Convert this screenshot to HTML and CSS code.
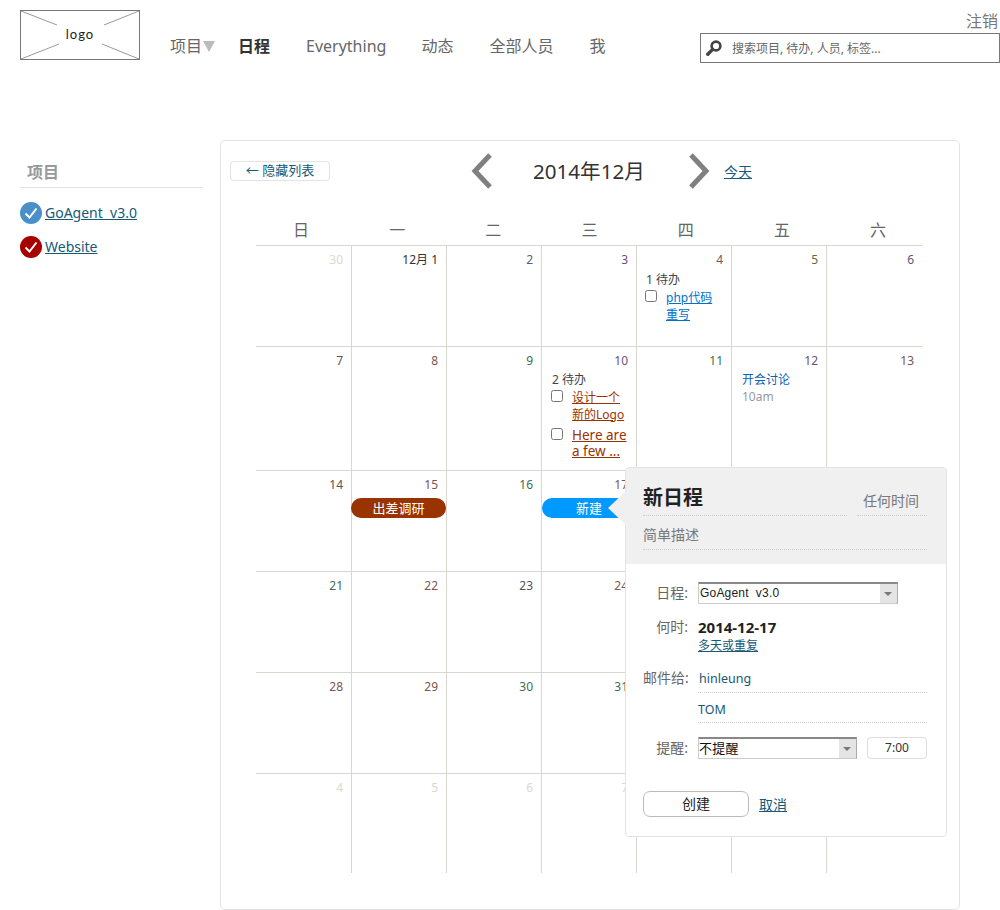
FILE: index.html
```html
<!DOCTYPE html>
<html lang="zh">
<head>
<meta charset="utf-8">
<title>日程</title>
<link rel="stylesheet" href="styles.css">
</head>
<body>
<header class="topbar">
  <a class="logo">
    <svg class="logo-x" width="118" height="48" viewBox="0 0 118 48"><path d="M0 0L36 14M118 0L83 14M0 48L38 33M118 48L81 33" stroke="#999" fill="none"/></svg>
    <span>logo</span>
  </a>
  <nav class="nav">
    <a class="nav-item nav-first">项目<i class="tri"></i></a>
    <a class="nav-item active">日程</a>
    <a class="nav-item nav-every">Everything</a>
    <a class="nav-item">动态</a>
    <a class="nav-item">全部人员</a>
    <a class="nav-item">我</a>
  </nav>
  <div class="account">
    <a class="logout">注销</a>
    <div class="search">
      <svg width="16" height="16" viewBox="0 0 16 16"><circle cx="10" cy="6" r="4.4" fill="none" stroke="#444" stroke-width="2.6"/><path d="M6.6 9.4L1.8 14.2" stroke="#444" stroke-width="3.4" stroke-linecap="round"/></svg>
      <span>搜索项目, 待办, 人员, 标签...</span>
    </div>
  </div>
</header>

<div class="page">
  <aside class="side">
    <h3 class="side-title">项目</h3>
    <div class="proj">
      <svg width="22" height="22" viewBox="0 0 22 22"><circle cx="11" cy="11" r="11" fill="#4a90c8"/><path d="M5.5 11.5L9.5 15.5L16.5 6.5" fill="none" stroke="#fff" stroke-width="2"/></svg>
      <a>GoAgent&nbsp;&nbsp;v3.0</a>
    </div>
    <div class="proj">
      <svg width="22" height="22" viewBox="0 0 22 22"><circle cx="11" cy="11" r="11" fill="#a80000"/><path d="M5.5 11.5L9.5 15.5L16.5 6.5" fill="none" stroke="#fff" stroke-width="2"/></svg>
      <a>Website</a>
    </div>
  </aside>

  <main class="panel">
    <div class="cal-head">
      <a class="hide-btn">← 隐藏列表</a>
      <svg class="chev-l" width="22" height="36" viewBox="0 0 22 36"><path d="M19 2L4 18L19 34" fill="none" stroke="#808080" stroke-width="5"/></svg>
      <h2 class="month">2014年12月</h2>
      <svg class="chev-r" width="22" height="36" viewBox="0 0 22 36"><path d="M3 2L18 18L3 34" fill="none" stroke="#808080" stroke-width="5"/></svg>
      <a class="today">今天</a>
    </div>
    <div class="weekdays">
      <span>日</span><span>一</span><span>二</span><span>三</span><span>四</span><span>五</span><span>六</span>
    </div>
    <div class="grid">
      <div class="cell"><span class="num out">30</span></div>
      <div class="cell"><span class="num first">12月 1</span></div>
      <div class="cell"><span class="num b">2</span></div>
      <div class="cell"><span class="num p">3</span></div>
      <div class="cell">
        <span class="num r">4</span>
        <div class="todo-count">1 待办</div>
        <label class="todo"><input type="checkbox"><a class="link-blue">php代码<br>重写</a></label>
      </div>
      <div class="cell"><span class="num o">5</span></div>
      <div class="cell"><span class="num p">6</span></div>

      <div class="cell"><span class="num">7</span></div>
      <div class="cell"><span class="num r">8</span></div>
      <div class="cell"><span class="num g">9</span></div>
      <div class="cell cell-narrow">
        <span class="num p">10</span>
        <div class="todo-count">2 待办</div>
        <label class="todo"><input type="checkbox"><a class="link-red">设计一个<br>新的Logo</a></label>
        <label class="todo todo-large"><input type="checkbox"><a class="link-red">Here are<br>a few ...</a></label>
      </div>
      <div class="cell"><span class="num g">11</span></div>
      <div class="cell">
        <span class="num p">12</span>
        <div class="meet">开会讨论</div>
        <div class="meet-time">10am</div>
      </div>
      <div class="cell"><span class="num r">13</span></div>

      <div class="cell"><span class="num">14</span></div>
      <div class="cell"><span class="num r">15</span><div class="pill pill-red">出差调研</div></div>
      <div class="cell"><span class="num g">16</span></div>
      <div class="cell"><span class="num r">17</span><div class="pill pill-blue">新建</div></div>
      <div class="cell"></div>
      <div class="cell"></div>
      <div class="cell"></div>

      <div class="cell"><span class="num g">21</span></div>
      <div class="cell"><span class="num r">22</span></div>
      <div class="cell"><span class="num">23</span></div>
      <div class="cell"><span class="num r">24</span></div>
      <div class="cell"></div>
      <div class="cell"></div>
      <div class="cell"></div>

      <div class="cell"><span class="num r">28</span></div>
      <div class="cell"><span class="num r">29</span></div>
      <div class="cell"><span class="num g">30</span></div>
      <div class="cell"><span class="num g">31</span></div>
      <div class="cell"></div>
      <div class="cell"></div>
      <div class="cell"></div>

      <div class="cell"><span class="num out">4</span></div>
      <div class="cell"><span class="num out">5</span></div>
      <div class="cell"><span class="num out">6</span></div>
      <div class="cell"><span class="num out">7</span></div>
      <div class="cell"></div>
      <div class="cell"></div>
      <div class="cell"></div>
    </div>

    <section class="pop">
      <i class="pop-arrow"></i>
      <div class="pop-head">
        <div class="pop-title-row">
          <h2 class="pop-title">新日程</h2>
          <span class="pop-any">任何时间</span>
        </div>
        <div class="pop-desc">简单描述</div>
      </div>
      <div class="pop-body">
        <div class="row row-cal">
          <span class="lbl">日程:</span>
          <div class="sel sel-wide"><span class="sel-text">GoAgent&nbsp;&nbsp;v3.0</span><i class="sel-btn"></i></div>
        </div>
        <div class="row row-when">
          <span class="lbl">何时:</span>
          <div class="when">
            <strong>2014-12-17</strong>
            <a class="repeat">多天或重复</a>
          </div>
        </div>
        <div class="row row-mail">
          <span class="lbl">邮件给:</span>
          <span class="mail">hinleung</span>
        </div>
        <div class="row row-mail2">
          <span class="lbl"></span>
          <span class="mail">TOM</span>
        </div>
        <div class="row row-remind">
          <span class="lbl">提醒:</span>
          <div class="sel sel-short"><span class="sel-text sel-cjk">不提醒</span><i class="sel-btn"></i></div>
          <span class="time-box">7:00</span>
        </div>
        <div class="actions">
          <a class="create">创建</a>
          <a class="cancel">取消</a>
        </div>
      </div>
    </section>
  </main>
</div>
</body>
</html>
```
FILE: styles.css
```css
* { box-sizing: border-box; }
html, body { margin: 0; padding: 0; }
body {
  width: 1000px;
  height: 910px;
  overflow: hidden;
  background: #fff;
  color: #333;
  font-family: "Noto Sans", "Noto Sans CJK SC", sans-serif;
  font-size: 12px;
}
a { color: #155a78; }
h2, h3 { margin: 0; }

/* top bar */
.topbar {
  display: flex;
  height: 140px;
  padding: 10px 0 0 20px;
  align-items: flex-start;
}
.logo {
  position: relative;
  display: flex;
  align-items: center;
  justify-content: center;
  width: 120px;
  height: 50px;
  border: 1px solid #777;
  color: #222;
  font: 400 13px/1 Lato, sans-serif;
  letter-spacing: 1px;
  padding-bottom: 2px;
}
.logo-x { position: absolute; left: 0; top: 0; }
.nav {
  display: flex;
  gap: 36px;
  margin: 25px 0 0 30px;
  width: 530px;
  font-size: 16px;
  line-height: 22px;
}
.nav-item { white-space: nowrap; color: #666; }
.nav-first { display: flex; align-items: center; margin-right: -13px; }
.nav-every { margin-right: -1px; }
.tri {
  display: block;
  width: 0;
  height: 0;
  margin-left: 1px;
  border-left: 6.5px solid transparent;
  border-right: 6.5px solid transparent;
  border-top: 11px solid #bbb;
}
.nav-item.active { color: #333; font-weight: 700; }
.account { width: 300px; display: flex; flex-direction: column; align-items: flex-end; }
.logout { font-size: 16px; line-height: 23px; color: #777; padding-right: 2px; }
.search {
  width: 300px;
  height: 30px;
  border: 1px solid #777;
  display: flex;
  align-items: center;
  gap: 10px;
  padding-left: 5px;
  color: #666;
  font-size: 12px;
}

/* page */
.page { display: flex; height: 770px; }
.side { width: 183px; margin: 21px 17px 0 20px; }
.side-title {
  height: 27px;
  padding-left: 7px;
  font-size: 16px;
  line-height: 22px;
  font-weight: 700;
  color: #999;
  border-bottom: 1px solid #e3e3e3;
  margin-bottom: 14px;
}
.proj { display: flex; align-items: center; gap: 3px; height: 22px; margin-bottom: 12px; font-size: 14px; line-height: 20px; }
.proj a { text-decoration: underline; }
.proj svg { flex: none; }
.panel {
  position: relative;
  width: 740px;
  height: 770px;
  border: 1px solid #e3e3e3;
  border-radius: 5px;
  padding: 12px 0 0 35px;
}

/* calendar head */
.cal-head { display: flex; align-items: center; height: 36px; }
.hide-btn {
  width: 100px;
  height: 20px;
  margin-left: -26px;
  border: 1px solid #e3e3e3;
  border-radius: 4px;
  text-align: center;
  font-size: 13px;
  line-height: 17px;
  text-decoration: none;
}
.chev-l { margin-left: 141px; }
.month { width: 112px; margin-left: 40px; font-size: 20.6px; font-weight: 400; line-height: 28px; white-space: nowrap; color: #333; }
.chev-r { margin-left: 43px; }
.today { margin-left: 14px; font-size: 14px; text-decoration: underline; }

.weekdays {
  display: grid;
  grid-template-columns: repeat(7, 96.2px);
  margin-top: 30px;
  height: 27px;
  font-size: 16px;
  line-height: 22px;
  color: #666;
  text-align: center;
}
.weekdays span { width: 90px; }

.grid {
  display: grid;
  width: 666px;
  grid-template-columns: repeat(6, 95px) 96px;
  grid-template-rows: 101px 124px 101px 101px 101px 99px;
  border-top: 1px solid #d9d6cf;
  margin-top: -1px;
}
.cell {
  position: relative;
  border-left: 1px solid #d9d6cf;
  border-bottom: 1px solid #d9d6cf;
  padding: 6px 0 0 0;
  min-width: 0;
}
.cell:nth-child(7n+1) { border-left: 0; }
.cell:nth-last-child(-n+7) { border-bottom: 0; }
.num { display: block; text-align: right; padding-right: 8px; font-size: 12px; line-height: 16px; color: #555; }
.num.out { color: #ddd8cc; }
.num.first { color: #333; }
.num.g { color: #3f6b55; }
.num.p { color: #6a4f7e; }
.num.b { color: #55607a; }
.num.r { color: #7a5650; }
.num.o { color: #62683f; }

.todo-count { margin: 4px 0 0 9px; font-size: 12px; line-height: 16px; color: #444; }
.cell-narrow .todo-count { margin: 3px 0 0 10px; }
.todo { display: flex; margin-top: 2px; padding-left: 8px; font-size: 12px; line-height: 16.5px; }
.cell-narrow .todo { padding-left: 9px; }
.todo input { width: 12px; height: 12px; margin: 0 9px 0 0; flex: none; }
.todo-large { font-size: 13.5px; margin-top: 4px; line-height: 16px; }
.todo-large input { margin-top: 1px; }
.link-blue { color: #0070c9; text-decoration: underline; }
.link-red { color: #993300; text-decoration: underline; white-space: nowrap; }
.meet { margin: 3px 0 0 10px; line-height: 16px; color: #0b62b4; font-size: 12px; }
.meet-time { margin: 1px 0 0 10px; color: #999; line-height: 16px; font-size: 12px; }

.pill {
  height: 20px;
  margin-top: 5px;
  border-radius: 10px;
  color: #fff;
  font-size: 13px;
  line-height: 20px;
  text-align: center;
}
.pill-red { background: #993300; margin-left: -1px; margin-right: 0; }
.pill-blue { background: #0099ff; width: 94px; margin-left: 0; }

/* popover */
.pop {
  position: absolute;
  left: 404px;
  top: 326px;
  width: 322px;
  height: 370px;
  background: #fff;
  border: 1px solid #e3e3e3;
  border-radius: 4px;
}
.pop-arrow {
  position: absolute;
  left: -18px;
  top: 23px;
  width: 0;
  height: 0;
  border-top: 17px solid transparent;
  border-bottom: 17px solid transparent;
  border-right: 18px solid #f0f0f0;
}
.pop-head {
  height: 96px;
  background: #f0f0f0;
  border-radius: 4px 4px 0 0;
  padding: 0 19px 0 17px;
}
.pop-title-row { display: flex; gap: 10px; height: 48px; padding-top: 14px; }
.pop-title {
  width: 204px;
  height: 34px;
  font-size: 20px;
  line-height: 32px;
  font-weight: 700;
  color: #222;
  border-bottom: 1px dotted #ccc;
}
.pop-any {
  width: 70px;
  height: 34px;
  padding-left: 6px;
  padding-top: 9px;
  font-size: 14px;
  line-height: 20px;
  color: #777;
  border-bottom: 1px dotted #ccc;
}
.pop-desc {
  height: 34px;
  padding-top: 9px;
  font-size: 14px;
  line-height: 20px;
  color: #777;
  border-bottom: 1px dotted #ccc;
}
.pop-body { padding: 0 19px 0 17px; }
.row { display: flex; align-items: center; }
.lbl { width: 45px; margin-right: 10px; text-align: right; font-size: 14px; line-height: 18px; color: #666; flex: none; white-space: nowrap; }
.row-cal { margin-top: 18px; height: 22px; }
.sel {
  display: flex;
  justify-content: space-between;
  height: 22px;
  border: 1px solid #ccc;
  border-top: 2px solid #888;
  border-right-color: #aaa;
  background: #fff;
  color: #222;
}
.sel-wide { width: 200px; }
.sel-short { width: 159px; }
.sel-text { font: 12px/18px "Liberation Sans", sans-serif; padding-left: 1px; letter-spacing: 0.2px; }
.sel-cjk { font: 13px/18px "Noto Sans CJK SC", sans-serif; color: #111; padding-left: 0; }
.sel-btn {
  position: relative;
  width: 17px;
  background: #e4e4e4;
}
.sel-btn::after {
  content: "";
  position: absolute;
  left: 4px;
  top: 8px;
  border-left: 4px solid transparent;
  border-right: 4px solid transparent;
  border-top: 4px solid #777;
}
.row-when { margin-top: 14px; align-items: flex-start; }
.when { display: flex; flex-direction: column; }
.when strong { font: 700 15px/18px "Noto Sans", sans-serif; color: #222; }
.repeat { font-size: 12px; line-height: 16px; text-decoration: underline; margin-top: 2px; }
.row-mail { margin-top: 14px; height: 25px; align-items: flex-start; }
.row-mail .lbl { margin-top: 1px; }
.row-mail2 { height: 30px; align-items: flex-start; }
.mail {
  display: block;
  flex: 1;
  align-self: stretch;
  padding: 2px 0 0 1px;
  font-size: 12.5px;
  line-height: 18px;
  color: #155a78;
  border-bottom: 1px dotted #ccc;
}
.row-mail2 .mail { padding: 8px 0 0; }
.row-remind { margin-top: 14px; height: 22px; }
.time-box {
  width: 60px;
  height: 22px;
  margin-left: 10px;
  border: 1px solid #ddd;
  border-radius: 4px;
  text-align: center;
  font-size: 12px;
  line-height: 20px;
  color: #333;
}
.actions { display: flex; align-items: center; gap: 10px; margin-top: 32px; }
.create {
  width: 106px;
  height: 26px;
  border: 1px solid #bbb;
  border-radius: 7px;
  text-align: center;
  font-size: 14px;
  line-height: 24px;
  color: #222;
}
.cancel { font-size: 14px; text-decoration: underline; }
```
